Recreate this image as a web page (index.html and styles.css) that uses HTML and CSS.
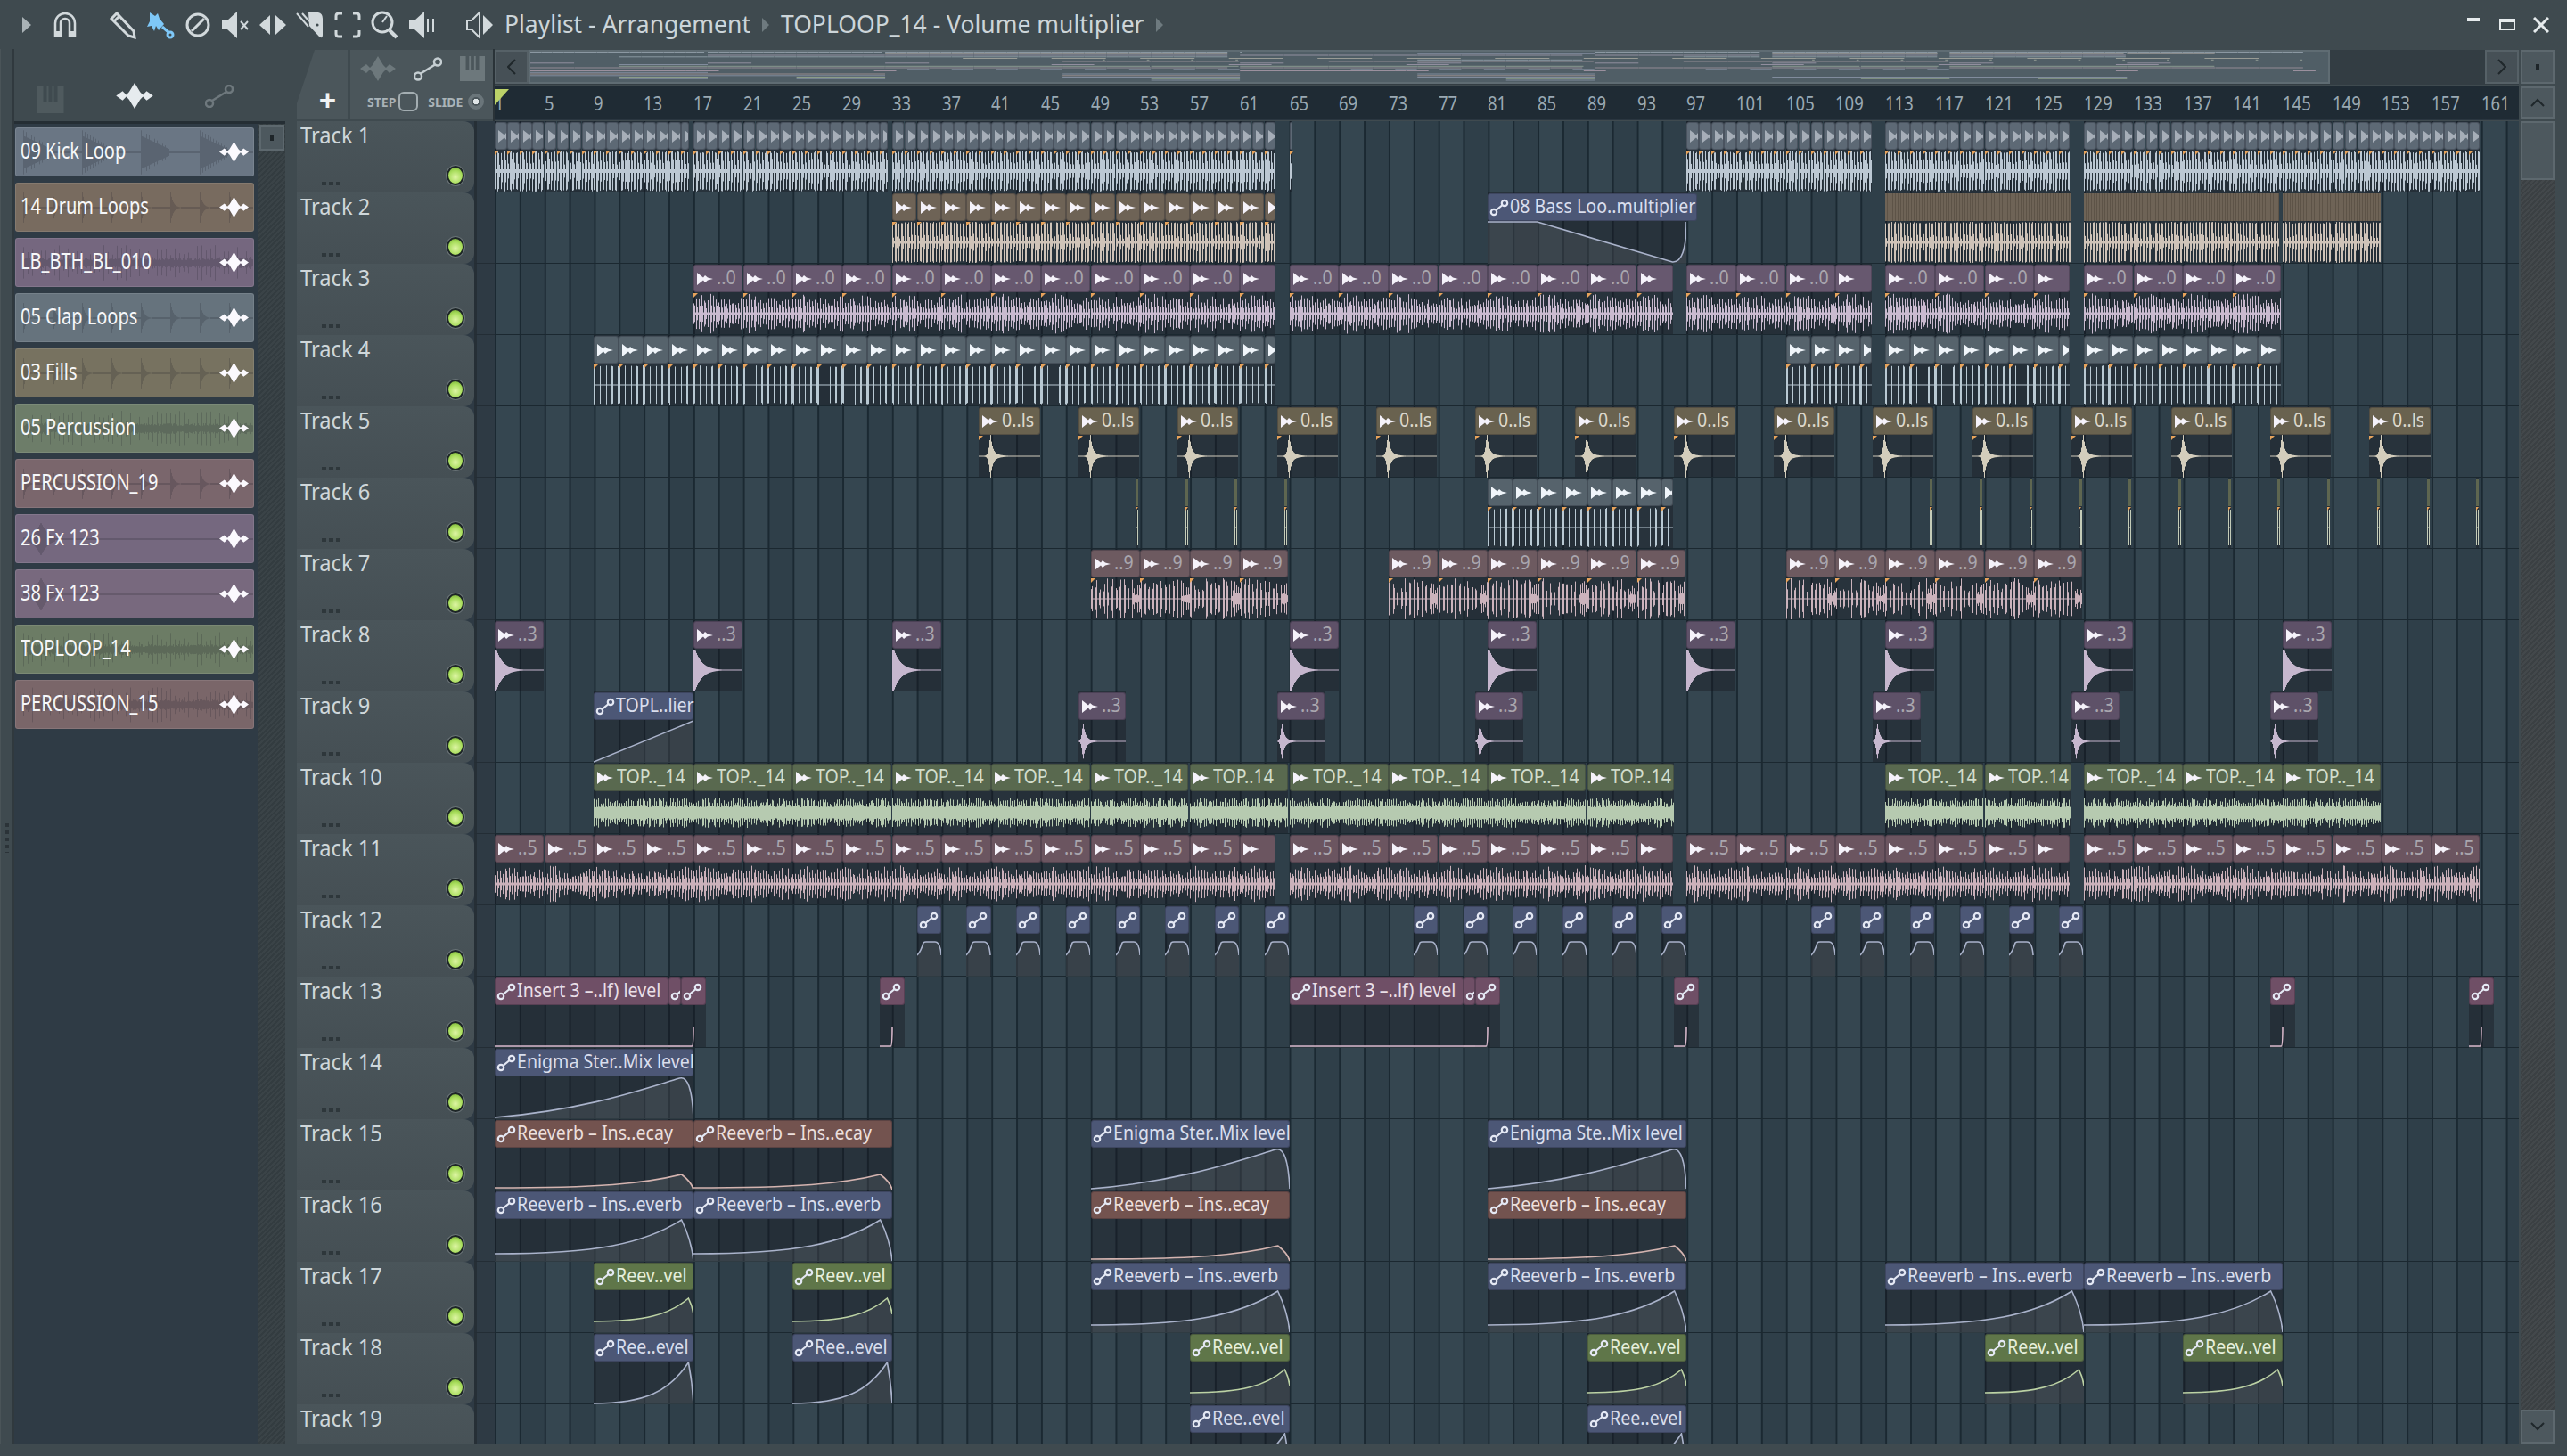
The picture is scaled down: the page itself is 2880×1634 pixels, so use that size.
FILE: index.html
```html
<!DOCTYPE html>
<html lang="en">
<head>
  <meta charset="UTF-8">
  <title>Playlist - Arrangement</title>
  <link rel="stylesheet" href="styles.css">
</head>
<body>
  <div class="app">
    <header class="titlebar">
      <div class="tool-first">
        <svg class="arrow" viewBox="0 0 10 18"><path d="M0 0 L10 9 L0 18 Z"/></svg>
        <svg class="tool" viewBox="0 0 32 32"><path class="magnet" d="M5 28 V14 a11 11 0 0 1 22 0 V28 h-6 V14 a5 5 0 0 0 -10 0 V28 Z"/><path d="M5 23 h6 v6 h-6 Z M21 23 h6 v6 h-6 Z"/></svg>
      </div>
      <div class="tool-group">
        <svg class="tool" viewBox="0 0 32 32"><path class="line" d="M3 9 L9 3 L28 23 L29 30 L22 28 Z M6 12 L12 6"/></svg>
        <svg class="tool tool-on" viewBox="0 0 32 32"><path d="M4 2 L10 6 L13 3 L15 9 L20 15 L14 22 L11 17 L9 23 L6 17 L1 18 L4 12 Z"/><path class="line" d="M18 18 L26 25"/><circle class="line" cx="27" cy="27" r="3"/></svg>
        <svg class="tool" viewBox="0 0 32 32"><circle class="line" cx="16" cy="16" r="12"/><path class="line" d="M9 23 L23 9"/></svg>
        <svg class="tool" viewBox="0 0 32 32"><path d="M1 11 h6 l11 -10 V31 l-11 -10 H1 Z"/><path class="line thin" d="M22 12 l8 9 M30 12 l-8 9"/></svg>
        <svg class="tool" viewBox="0 0 32 32"><path d="M13 5 V27 L1 16 Z M19 5 V27 L31 16 Z"/><path class="line thin dark" d="M16 10 V22"/></svg>
        <svg class="tool" viewBox="0 0 32 32"><path class="line thin" d="M1 3 L14 18 M7 3 L15 12"/><path d="M14 2 H25 Q30 3 30 9 V27 Q30 32 26 29 L15 17 Z"/><circle class="hole" cx="24" cy="16" r="1.6"/></svg>
        <svg class="tool small" viewBox="0 0 32 32"><path class="line" d="M3 10 V6 Q3 3 6 3 H10 M22 3 H26 Q29 3 29 6 V10 M29 22 V26 Q29 29 26 29 H22 M10 29 H6 Q3 29 3 26 V22"/></svg>
        <svg class="tool" viewBox="0 0 32 32"><circle class="line" cx="13" cy="13" r="11"/><path class="line thin" d="M13 13 L18 6"/><path class="line fat" d="M21 22 L29 30"/></svg>
        <svg class="tool" viewBox="0 0 32 32"><path d="M1 11 h6 l11 -10 V31 l-11 -10 H1 Z"/><path class="line thin" d="M22 9 V24 M28 9 V24"/></svg>
      </div>
      <svg class="tool tool-pl" viewBox="0 0 32 32"><path class="line thin" d="M2 11 h5 l9 -9 V30 l-9 -9 H2 Z"/><path d="M20 5 L31 16 L20 27 Z"/></svg>
      <span class="title">Playlist - Arrangement</span>
      <svg class="crumb" viewBox="0 0 8 16"><path d="M0 0 L8 8 L0 16 Z"/></svg>
      <span class="title">TOPLOOP_14 - Volume multiplier</span>
      <svg class="crumb" viewBox="0 0 8 16"><path d="M0 0 L8 8 L0 16 Z"/></svg>
      <div class="win-buttons">
        <span class="win-min"></span>
        <span class="win-max"></span>
        <svg class="win-close" viewBox="0 0 18 18"><path d="M1 1 L17 17 M17 1 L1 17"/></svg>
      </div>
    </header>

    <div class="main">
      <div class="edge"><div class="grip"></div></div>

      <aside class="picker">
        <div class="picker-modes">
          <svg class="piano dim2" viewBox="0 0 30 30"><path d="M0 0 H30 V30 H0 Z M7 0 V17 H11 V0 Z M13 0 V17 H17 V0 Z M19 0 V17 H23 V0 Z" fill-rule="evenodd"/></svg>
          <svg class="star-icon" viewBox="0 0 40 28"><path d="M0 14 L7 9 L11 13 L14 10 L20 0 L26 10 L29 13 L33 9 L40 14 L33 19 L29 15 L26 18 L20 28 L14 18 L11 15 L7 19 Z"/></svg>
          <svg class="auto-icon dim2" viewBox="0 0 32 26"><circle cx="5" cy="21" r="4"/><circle cx="27" cy="5" r="4"/><path d="M8 18 L24 8"/></svg>
        </div>
        <div class="picker-body">
          <ul class="picker-list" id="pickerList"></ul>
          <div class="picker-scroll"><div class="scroll-btn"><i></i></div></div>
        </div>
      </aside>

      <section class="playlist">
        <div class="corner">
          <div class="add-tab"><span>+</span></div>
          <div class="source">
            <div class="source-icons">
              <svg class="star-icon" viewBox="0 0 40 28"><path d="M0 14 L7 9 L11 13 L14 10 L20 0 L26 10 L29 13 L33 9 L40 14 L33 19 L29 15 L26 18 L20 28 L14 18 L11 15 L7 19 Z"/></svg>
              <svg class="auto-icon" viewBox="0 0 32 26"><circle cx="5" cy="21" r="4"/><circle cx="27" cy="5" r="4"/><path d="M8 18 L24 8"/></svg>
              <svg class="piano" viewBox="0 0 30 30"><path d="M0 0 H30 V30 H0 Z M7 0 V17 H11 V0 Z M13 0 V17 H17 V0 Z M19 0 V17 H23 V0 Z" fill-rule="evenodd"/></svg>
            </div>
            <div class="source-opts">
              <span>STEP</span><i class="step-box"></i>
              <span class="slide">SLIDE</span><i class="slide-dot"></i>
            </div>
          </div>
        </div>

        <div class="timeline">
          <div class="overview-row">
            <div class="nav-btn"><svg viewBox="0 0 10 18"><path d="M9 1 L1 9 L9 17"/></svg></div>
            <div class="overview-track"><svg class="overview" id="overview"></svg></div>
            <div class="nav-btn"><svg viewBox="0 0 10 18"><path d="M1 1 L9 9 L1 17"/></svg></div>
          </div>
          <div class="ruler" id="ruler">
            <svg class="play-mark" viewBox="0 0 16 18"><path d="M0 0 H16 L0 18 Z"/></svg>
          </div>
        </div>

        <div class="side-top">
          <div class="scroll-btn tall"><i></i></div>
          <div class="scroll-btn up"><svg viewBox="0 0 16 10"><path d="M1 9 L8 2 L15 9"/></svg></div>
        </div>

        <div class="tracks" id="tracks"></div>

        <div class="vscroll">
          <div class="thumb"></div>
          <div class="scroll-btn down"><svg viewBox="0 0 16 10"><path d="M1 1 L8 8 L15 1"/></svg></div>
        </div>
      </section>
    </div>
  </div>

  <script src="script.js"></script>
</body>
</html>
```

FILE: styles.css
```css
* {
  box-sizing: border-box;
}
html, body {
  margin: 0;
  padding: 0;
}
body {
  width: 2880px;
  height: 1634px;
  overflow: hidden;
  background-color: #3f4a4f;
  color: #d3dadd;
  font-family: "Noto Sans", "Open Sans", sans-serif;
}
svg {
  display: block;
}

/* title bar */
.titlebar {
  height: 55px;
  display: flex;
  align-items: center;
  padding-left: 25px;
  background-color: #3f4a4f;
}
.tool-first {
  display: flex;
  align-items: center;
  width: 97px;
}
.arrow {
  width: 10px;
  height: 18px;
  fill: #a9b2b6;
  margin-right: 22px;
}
.tool-group {
  display: flex;
  gap: 10px;
}
.tool {
  width: 32px;
  height: 32px;
  fill: #d2d9dc;
}
.tool .line {
  fill: none;
  stroke: #d2d9dc;
  stroke-width: 3;
}
.tool .thin {
  stroke-width: 2;
}
.tool .fat {
  stroke-width: 4;
}
.tool .dark {
  stroke: #3f4a4f;
}
.tool .magnet {
  fill: none;
  stroke: #d2d9dc;
  stroke-width: 2.5;
}
.tool .hole {
  fill: #3f4a4f;
}
.tool-on {
  fill: #7ec8f8;
}
.tool-on .line {
  stroke: #7ec8f8;
}
.tool-pl {
  margin-left: 32px;
  margin-right: 12px;
}
.title {
  font-size: 26.5px;
  color: #ccd5d9;
  white-space: nowrap;
  margin-top: -2px;
}
.crumb {
  width: 8px;
  height: 16px;
  fill: #6e7a7f;
  margin: 0 13px;
}
.win-buttons {
  margin-left: auto;
  width: 112px;
  display: flex;
  align-items: center;
  height: 18px;
}
.win-min {
  width: 14px;
  height: 4px;
  margin-top: -12px;
  background: #e6ebed;
}
.win-max {
  width: 18px;
  height: 13px;
  margin-left: 22px;
  border: 2px solid #e6ebed;
  border-top-width: 4px;
}
.win-close {
  width: 18px;
  height: 18px;
  margin-left: 20px;
  fill: none;
  stroke: #e6ebed;
  stroke-width: 3;
}

.main {
  display: flex;
  height: 1565px;
}
.edge {
  width: 16px;
  display: flex;
  align-items: center;
  border-right: 2px solid #30393e;
  border-left: 1px solid #4a5458;
  padding-top: 205px;
  padding-left: 5px;
}
.grip {
  width: 4px;
  height: 33px;
  background: repeating-linear-gradient(#2b3338 0 4px, transparent 4px 8px);
}

/* picker */
.picker {
  width: 304px;
  display: flex;
  flex-direction: column;
}
.picker-modes {
  height: 81px;
  padding: 38px 58px 0 25px;
  display: flex;
  justify-content: space-between;
  align-items: flex-start;
  background-color: #3f4a4f;
}
.picker-modes .piano {
  width: 31px;
  height: 30px;
  margin-top: 4px;
}
.picker-modes .star-icon {
  width: 42px;
  height: 29px;
  fill: #e6ebee;
}
.picker-modes .auto-icon {
  width: 32px;
  height: 26px;
  margin-top: 2px;
}
.dim2 {
  opacity: .35;
}
.picker-body {
  flex: 1;
  display: flex;
  height: 1484px;
  background-color: #2f3b45;
  border-top: 3px solid #252e34;
}
.picker-list {
  list-style-type: none;
  margin: 0;
  padding: 4px 5px 0 1px;
  width: 275px;
  display: flex;
  flex-direction: column;
  gap: 7px;
}
.picker-item {
  position: relative;
  height: 55px;
  border-radius: 3px;
  border: 1px solid rgba(255, 255, 255, .1);
  background: var(--item);
  display: flex;
  align-items: center;
  padding-left: 5px;
  overflow: hidden;
}
.picker-wave {
  position: absolute;
  left: 0;
  top: 0;
  stroke: rgba(30, 30, 40, .2);
  stroke-width: 1;
  fill: none;
}
.picker-item span {
  position: relative;
  font-size: 26px;
  color: #f6f7f9;
  white-space: nowrap;
  margin-top: -5px;
  transform: scaleX(.77);
  transform-origin: left center;
}
.picker-item .star-icon {
  position: absolute;
  right: 5px;
  top: 12px;
  width: 33px;
  height: 29px;
  fill: #fbf9fe;
}
.picker-scroll {
  width: 30px;
  padding: 1px 1px 0 1px;
  background: repeating-linear-gradient(135deg, #3a4347 0 2px, #333c40 2px 4px);
}
.scroll-btn {
  background-color: #4d585e;
  border: 2px solid #5d686e;
  display: flex;
  align-items: center;
  justify-content: center;
  height: 29px;
}
.scroll-btn i {
  width: 4px;
  height: 7px;
  background: #1e2529;
}
.scroll-btn svg {
  width: 16px;
  height: 10px;
  fill: none;
  stroke: #1f272b;
  stroke-width: 2;
}

/* playlist */
.playlist {
  margin-left: 13px;
  width: 2533px;
  display: grid;
  grid-template-columns: 222px 2271px 40px;
  grid-template-rows: 81px 1484px;
}
.corner {
  display: flex;
  gap: 3px;
  padding-top: 1px;
  border-right: 2px solid #2a3338;
}
.add-tab {
  width: 57px;
  height: 78px;
  background: #4b565b;
  clip-path: polygon(20px 0, 100% 0, 100% 100%, 0 100%, 0 60px);
  display: flex;
  align-items: flex-end;
  justify-content: center;
  padding-left: 12px;
}
.add-tab span {
  font-size: 34px;
  line-height: 44px;
  color: #f0f3f4;
  font-weight: bold;
}
.source {
  width: 160px;
  height: 78px;
  background: #4b565b;
  padding: 5px 8px 0 8px;
}
.source-icons {
  display: flex;
  justify-content: space-between;
  align-items: center;
  height: 32px;
  padding-left: 3px;
}
.source .star-icon {
  width: 40px;
  height: 30px;
  fill: #6d787c;
}
.auto-icon {
  fill: none;
  stroke: #c5ced2;
  stroke-width: 2.5;
}
.source .auto-icon {
  width: 32px;
  height: 27px;
}
.piano {
  fill: #6d787c;
}
.source .piano {
  width: 30px;
  height: 28px;
}
.source-opts {
  display: flex;
  align-items: center;
  margin-top: 10px;
  padding-left: 11px;
  font-size: 14px;
  font-weight: bold;
  color: #aab3b7;
}
.step-box {
  width: 22px;
  height: 22px;
  margin-left: 3px;
  border: 2px solid #a3adb1;
  border-radius: 6px;
}
.slide {
  margin-left: 11px;
}
.slide-dot {
  width: 18px;
  height: 18px;
  margin-left: 6px;
  border-radius: 50%;
  border: 4px solid #6a757a;
  background: radial-gradient(#dfe5e7 0 3px, #4b565b 3.5px);
}

.timeline {
  display: flex;
  flex-direction: column;
}
.overview-row {
  height: 39px;
  margin-top: 1px;
  display: flex;
  background-color: #333d43;
}
.nav-btn {
  width: 38px;
  height: 38px;
  background: #465056;
  border: 2px solid #566167;
  display: flex;
  align-items: center;
  justify-content: center;
}
.nav-btn svg {
  width: 10px;
  height: 18px;
  fill: none;
  stroke: #1f272b;
  stroke-width: 2;
}
.overview-track {
  flex: 1;
}
.overview {
  width: 2021px;
  height: 38px;
  background: #505e66;
  border: 2px solid #5f6c73;
}
.overview rect {
  fill: var(--wave);
  opacity: .55;
}
.ruler {
  position: relative;
  height: 38px;
  margin-top: 2px;
  background: #1f2b34;
  border-bottom: 2px solid #2a3640;
  overflow: hidden;
}
.ruler span {
  position: absolute;
  top: 2px;
  font-size: 22px;
  line-height: 32px;
  color: #9aa9b3;
  transform: scaleX(.84);
  transform-origin: left center;
}
.play-mark {
  position: absolute;
  left: 0;
  top: 3px;
  width: 16px;
  height: 18px;
  fill: #bcd268;
  z-index: 1;
}
.side-top {
  padding: 1px 0 0 2px;
  display: flex;
  flex-direction: column;
  gap: 3px;
}
.side-top .scroll-btn {
  width: 38px;
  height: 38px;
}
.side-top .up {
  height: 36px;
}

/* a little room above the first row so its name is not clipped */
.tracks {
  grid-column: 1 / 3;
  height: 1488px;
  margin-top: -4px;
  padding-top: 4px;
  overflow: hidden;
  background-color: #2e3a44;
  background-clip: content-box;
}
.track {
  display: grid;
  grid-template-columns: 199px 23px 2271px;
  height: 80px;
}
.track-head {
  position: relative;
  border-radius: 0 12px 12px 0;
  background: linear-gradient(#4a555a, #454f54);
  padding-left: 4px;
}
.track-name {
  font-size: 26px;
  line-height: 30px;
  color: #cfd7da;
  white-space: nowrap;
  transform: scaleX(.91);
  transform-origin: left center;
}
.track-dots {
  position: absolute;
  left: 28px;
  top: 68px;
  width: 21px;
  height: 4px;
  background: repeating-linear-gradient(90deg, #2e373b 0 5px, transparent 5px 8px);
}
.led {
  position: absolute;
  left: 168px;
  top: 50px;
  width: 20px;
  height: 22px;
  border-radius: 50%;
  border: 2px solid #1d2526;
  outline: 1px solid #697276;
  background: radial-gradient(circle at 50% 60%, #dff5a6 0, #a8dd5c 55%, #6ba32c 100%);
}
.track-strip {
  border-left: 3px solid #262f36;
  border-bottom: 1px solid #232d35;
}
.lane {
  position: relative;
  border-bottom: 1px solid #1b2830;
  background-color: #2f3f49;
  background-image:
    linear-gradient(90deg, #1b2932 0, #1b2932 1.6px, transparent 1.6px),
    linear-gradient(90deg, #354650 0, #354650 50%, transparent 50%);
  background-size: 27.86px 100%, 55.72px 100%;
}

/* clips */
.clip {
  position: absolute;
  top: 0;
  height: 79px;
  background: rgba(22, 22, 28, .38);
}
.clip-head {
  height: 31px;
  margin-top: 1px;
  display: flex;
  align-items: center;
  border-radius: 3px;
  border: 1px solid rgba(20, 20, 30, .25);
  background: var(--head);
  color: var(--text);
}
/* clips too short for a name only show as much of the icon as fits */
.narrow .clip-head {
  overflow: hidden;
}
.clip-head span {
  font-size: 22px;
  line-height: 22px;
  white-space: nowrap;
  flex: none;
  margin-top: -6px;
  transform: scaleX(.89);
  transform-origin: left center;
}
.clip-head .dim {
  color: #a9a6ae;
}
.clip-icon {
  flex: none;
  margin-left: 3px;
  margin-right: 4px;
  width: 18px;
  height: 14px;
  fill: #f5f2fa;
}
.clip-steel .clip-icon {
  fill: #a6aeb8;
}
.clip-row .clip-icon {
  fill: #f0f5fa;
}
.auto-mark {
  flex: none;
  width: 24px;
  height: 30px;
  fill: var(--head);
  stroke: #e4e8f4;
  stroke-width: 2.2;
}
.clip-body {
  position: absolute;
  left: 0;
  top: 32px;
  fill: none;
  stroke: var(--wave);
  stroke-width: 1;
}
.clip-body .fill {
  fill: rgba(255, 255, 255, .09);
  stroke: none;
}
.clip-body .curve {
  stroke-width: 1.6;
}
.mark {
  position: absolute;
  left: 0;
  top: 33px;
  width: 0;
  height: 0;
  border-top: 5px solid #e7a35b;
  border-right: 5px solid transparent;
}
.sliver .mark {
  border-top-width: 4px;
  border-right-width: 3px;
}
.clip.dense .clip-head {
  border: none;
  border-radius: 0;
  background: repeating-linear-gradient(90deg, var(--head) 0 2px, #5d5347 2px 3px);
}
.clip.sliver .clip-head {
  border: none;
  border-radius: 0;
}

/* clip colours */
.clip-steel { --head: #5d6975; --wave: #bcc8d3; --text: #d4dae0; }
.clip-row   { --head: #56636c; --wave: #b9c9d3; --text: #d4dae0; }
.clip-tan   { --head: #6e6356; --wave: #cfc3b8; --text: #ddd5cb; }
.clip-lilac { --head: #67586f; --wave: #c9bacf; --text: #d7cfdb; }
.clip-olive { --head: #69624f; --wave: #d3cdbc; --text: #dcd8cc; }
.clip-sage  { --head: #5e6650; --wave: #c4ccb8; --text: #dbe0d2; }
.clip-mauve { --head: #6d5a60; --wave: #cbb3bc; --text: #d8ced2; }
.clip-plum  { --head: #5e5168; --wave: #c6b7ce; --text: #d7cfdb; }
.clip-moss  { --head: #59694f; --wave: #b6cab0; --text: #d2ddcc; }
.clip-rose  { --head: #6b5560; --wave: #cbb1ba; --text: #d8ced2; }
.clip-blue  { --head: #4c5776; --wave: #aab3cb; --text: #d9deed; }
.clip-pink  { --head: #6f4f66; --wave: #d9b9cc; --text: #eadfe6; }
.clip-red   { --head: #73534f; --wave: #d4b4b0; --text: #ecdfdc; }
.clip-green { --head: #5f7649; --wave: #bcd2a4; --text: #e6efdc; }

/* right scrollbar */
.vscroll {
  margin-left: 2px;
  width: 38px;
  display: flex;
  flex-direction: column;
  background: repeating-linear-gradient(135deg, #43484b 0 2px, #3b4043 2px 4px);
}
.thumb {
  height: 66px;
  background: #4d585e;
  border: 2px solid #5d686e;
}
.vscroll .down {
  margin-top: auto;
  height: 38px;
}
```

FILE: script.js
```js
// Builds the picker, ruler, tracks and overview from the arrangement data below
const BAR = 13.93;
const barX = (bar) => (bar - 1) * BAR;
const STAR = 'M0 14 L7 9 L11 13 L14 10 L20 0 L26 10 L29 13 L33 9 L40 14 L33 19 L29 15 L26 18 L20 28 L14 18 L11 15 L7 19 Z';

// Small repeatable random so the waveforms stay the same on every load
let seed = 12345;
function rnd() {
  seed = (seed * 16807) % 2147483647;
  return seed / 2147483647;
}

// Spiky sample: tall peak, a shorter column, then a gap near the centre line
function spiky(x, pitch, tall, mid, low) {
  const p = x % pitch;
  if (p < pitch * 0.36) return tall();
  if (p < pitch * 0.7) return mid();
  return low;
}

// Half height of the waveform at column x, by kind of sample
const WAVES = {
  kick: (x) => spiky(x, 3.5, () => 20 + rnd() * 3, () => 7 + rnd() * 7, 2),
  drum: (x) => spiky(x, 3.5, () => 21 + rnd() * 2, () => 4 + rnd() * 6, 1.5),
  noise: (x) => spiky(x, 3.1, () => (12 + rnd() * 11) * (0.88 + 0.12 * Math.sin(x / 9)), () => 5 + rnd() * 5, 1.5),
  rose: (x) => spiky(x, 3.1, () => (10 + rnd() * 11) * (0.88 + 0.12 * Math.sin(x / 7)), () => 5 + rnd() * 4, 1.5),
  green: (x) => (x % 2.6 < 1.2 ? 10 + rnd() * 7 : 6 + rnd() * 3),
  lines: (x) => (x % 6.8 < 1.7 ? 20 + rnd() * 2 : 0.5),
  star: (x) => (x < 13 ? Math.pow(x / 13, 8) * 24 + 0.5 : Math.max(0.5, 24 * Math.exp(-(x - 13) / 2.2) + 5 * Math.exp(-(x - 13) / 9))),
  boom: (x) => (x < 2 ? 23 : Math.max(0.5, 23 * Math.exp(-(x - 2) / 8))),
  small: (x) => (x < 5 ? Math.pow(x / 5, 3) * 19 + 0.5 : Math.max(0.5, 19 * Math.exp(-(x - 5) / 2.5) + 4 * Math.exp(-(x - 5) / 8))),
  perc: (x) => {
    const t = x % 55.72;
    if (t > 47) return x % 2 < 1 ? 8 + rnd() * 12 : 3 + rnd() * 4;
    return x % 4.6 < 2 ? 7 + rnd() * 16 : 0.5;
  },
  sliver: (x) => (x < 1 || x > 2 ? 20 : 0.5)
};

function wavePath(kind, w, mid) {
  let d = '';
  for (let x = 0.5; x < w; x += 1) {
    const a = WAVES[kind](x);
    d += `M${x} ${(mid - a).toFixed(1)}V${(mid + a).toFixed(1)}`;
  }
  return d;
}

// Automation curves, y values are pixels inside the clip body
function peakCurve(flat, peak, end, at) {
  return (w) => {
    const p = w * at;
    return `M0 ${flat}C${p * 0.55} ${flat} ${p * 0.8} ${flat - (flat - peak) * 0.3} ${p} ${peak}Q${w * 0.99} ${(peak + end) / 2} ${w} ${end}`;
  };
}
const CURVES = {
  ramp: (w) => `M0 47L${w} 1`,
  enigma: (w) => `M0 46C${w * 0.45} 38 ${w * 0.75} 14 ${w * 0.93} 2Q${w * 0.99} -2 ${w} 46`,
  hump: (w) => `M0 24Q4 20 7 10Q8 9 10 9H20Q26 9 27 24`,
  low: peakCurve(45, 30, 47, 0.94),
  big: peakCurve(39, 1, 47, 0.94),
  mid: peakCurve(35, 9, 27, 0.95),
  sharp: peakCurve(47, 1, 47, 0.95),
  flat: (w) => `M0 46H${w}`,
  rise: (w) => `M0 46H${w * 0.44}Q${w * 0.5} 46 ${w * 0.5} 24`,
  bass: (w) => `M0 1H${w * 0.25}L${w * 0.93} 46Q${w} 47 ${w} 1`
};

// run() fills bars from start to end with equal clips
function run(start, end, step, extra) {
  const clips = [];
  for (let b = start; b < end - 0.01; b += step) {
    clips.push(Object.assign({ at: b, len: Math.min(step, end - b) - 0.02 }, extra));
  }
  return clips;
}
function every(list, len, extra) {
  return list.map((at) => Object.assign({ at, len }, extra));
}
function steps(start, count, step) {
  return Array.from({ length: count }, (_, i) => start + i * step);
}
function runAll(groups, step, extra) {
  return groups.flatMap((g) => run(g[0], g[1], step, extra));
}
function auto(at, len, color, label, curve, headExtra) {
  return { at, len, color, label, curve, headExtra, auto: true };
}

const audio = (color, wave, label, mark) => ({ color, wave, label, mark });

const top10 = audio('moss', 'green', 'TOP.._14');
const top10End = audio('moss', 'green', 'TOP..14');

const TRACKS = [
  runAll([[1, 16.7], [17, 32.7], [33, 63.9], [97, 111.9], [113, 127.9], [129, 160.9]], 1, audio('steel', 'kick', '', true))
    .concat(every([65], 0.2, audio('steel', 'kick', '', true))),

  run(33, 63.9, 2, audio('tan', 'drum', '', true))
    .concat([auto(81, 16, 'blue', '08 Bass Loo..multiplier', 'bass', 12)])
    .concat([[113, 14.9], [129, 15.7], [145, 7.9]].map((g) => Object.assign({ at: g[0], len: g[1], dense: true }, audio('tan', 'drum', '', false)))),

  runAll([[17, 63.9], [65, 95.9], [97, 111.9], [113, 127.9], [129, 144.9]], 4, audio('lilac', 'noise', '..0', true)),

  runAll([[9, 63.9], [105, 111.9], [113, 127.9], [129, 144.9]], 2, audio('row', 'lines', '', true)),

  every(steps(40, 15, 8), 4.9, audio('olive', 'star', '0..ls', true)),

  every(steps(52.6, 4, 4).concat(steps(116.6, 12, 4)), 0.22, Object.assign({ sliver: true }, audio('sage', 'sliver', '', true)))
    .concat(run(81, 95.9, 2, audio('row', 'lines', '', true))),

  runAll([[49, 64.9], [73, 96.9], [105, 128.9]], 4, audio('mauve', 'perc', '..9', true)),

  every([1, 17, 33, 65, 81, 97, 113, 129, 145], 3.95, audio('plum', 'boom', '..3')),

  every([48, 64, 80, 112, 128, 144], 3.85, audio('plum', 'small', '..3'))
    .concat([auto(9, 8, 'blue', 'TOPL..lier', 'ramp')]),

  run(9, 56.9, 8, top10).concat(run(57, 64.9, 8, top10End))
    .concat(run(65, 88.9, 8, top10)).concat(run(89, 96, 8, top10End))
    .concat(run(113, 120.9, 8, top10)).concat(run(121, 128, 8, top10End))
    .concat(run(129, 152.9, 8, top10)),

  runAll([[1, 63.9], [65, 95.9], [97, 127.9], [129, 160.9]], 4, audio('rose', 'rose', '..5')),

  every(steps(35, 8, 4).concat(steps(75, 6, 4), steps(107, 6, 4)), 1.95, { color: 'blue', label: '', curve: 'hump', auto: true }),

  [
    auto(1, 14, 'pink', 'Insert 3 –..lf) level', 'flat'),
    auto(15, 0.98, 'pink', '', 'flat'),
    auto(16, 2, 'pink', '', 'rise'),
    auto(32, 2, 'pink', '', 'rise'),
    auto(65, 14, 'pink', 'Insert 3 –..lf) level', 'flat'),
    auto(79, 0.98, 'pink', '', 'flat'),
    auto(80, 2, 'pink', '', 'rise'),
    auto(96, 2, 'pink', '', 'rise'),
    auto(144, 2, 'pink', '', 'rise'),
    auto(160, 2, 'pink', '', 'rise')
  ],

  [auto(1, 16, 'blue', 'Enigma Ster..Mix level', 'enigma')],

  [
    auto(1, 16, 'red', 'Reeverb – Ins..ecay', 'low'),
    auto(17, 16, 'red', 'Reeverb – Ins..ecay', 'low'),
    auto(49, 16, 'blue', 'Enigma Ster..Mix level', 'enigma'),
    auto(81, 16, 'blue', 'Enigma Ste..Mix level', 'enigma')
  ],

  [
    auto(1, 16, 'blue', 'Reeverb – Ins..everb', 'big'),
    auto(17, 16, 'blue', 'Reeverb – Ins..everb', 'big'),
    auto(49, 16, 'red', 'Reeverb – Ins..ecay', 'low'),
    auto(81, 16, 'red', 'Reeverb – Ins..ecay', 'low')
  ],

  [
    auto(9, 8, 'green', 'Reev..vel', 'mid'),
    auto(25, 8, 'green', 'Reev..vel', 'mid'),
    auto(49, 16, 'blue', 'Reeverb – Ins..everb', 'big'),
    auto(81, 16, 'blue', 'Reeverb – Ins..everb', 'big'),
    auto(113, 16, 'blue', 'Reeverb – Ins..everb', 'big'),
    auto(129, 16, 'blue', 'Reeverb – Ins..everb', 'big')
  ],

  [
    auto(9, 8, 'blue', 'Ree..evel', 'sharp'),
    auto(25, 8, 'blue', 'Ree..evel', 'sharp'),
    auto(57, 8, 'green', 'Reev..vel', 'mid'),
    auto(89, 8, 'green', 'Reev..vel', 'mid'),
    auto(121, 8, 'green', 'Reev..vel', 'mid'),
    auto(137, 8, 'green', 'Reev..vel', 'mid')
  ],

  [
    auto(57, 8, 'blue', 'Ree..evel', 'sharp'),
    auto(89, 8, 'blue', 'Ree..evel', 'sharp')
  ]
];

const AUDIO_ICON = '<svg class="clip-icon" viewBox="0 0 18 14"><path d="M0 0 L7 5.5 L9 3 L12 5.5 L18 7 L12 8.5 L9 11 L7 8.5 L0 14 Z"/></svg>';
const AUTO_ICON = '<svg class="auto-mark" viewBox="0 0 24 30"><path d="M6 20 L18 10"/><circle cx="6" cy="20" r="3.2"/><circle cx="18" cy="10" r="3.2"/></svg>';

function clipHtml(clip) {
  // Whole pixels keep the one pixel waveform columns sharp
  const left = Math.round(barX(clip.at));
  const w = Math.max(3, Math.round(barX(clip.at + clip.len)) - left);
  let cls = `clip clip-${clip.color}`;
  if (clip.dense) cls += ' dense';
  if (clip.sliver) cls += ' sliver';
  if (w < 45) cls += ' narrow';

  let head = '';
  if (clip.auto) {
    head = AUTO_ICON;
  } else if (!clip.dense && !clip.sliver) {
    head = AUDIO_ICON;
  }
  // A clip cut short has no room left for its name
  if (clip.label && w >= 45) {
    const dim = clip.label.startsWith('..') ? ' class="dim"' : '';
    head += `<span${dim}>${clip.label}</span>`;
  }

  let body = '';
  if (clip.auto) {
    const d = CURVES[clip.curve](w);
    body = `<path class="fill" d="${d}V48H0Z"/><path class="curve" d="${d}"/>`;
  } else {
    body = `<path d="${wavePath(clip.wave, w, 24)}"/>`;
  }
  const mark = clip.mark ? '<i class="mark"></i>' : '';
  const headStyle = clip.headExtra ? ` style="width:${w + clip.headExtra}px"` : '';
  return `<div class="${cls}" style="left:${left}px;width:${w}px">` +
    `<div class="clip-head"${headStyle}>${head}</div>` +
    `<svg class="clip-body" width="${w}" height="48">${body}</svg>${mark}</div>`;
}

// Track rows
document.getElementById('tracks').innerHTML = TRACKS.map((clips, i) => `
  <div class="track">
    <div class="track-head">
      <div class="track-name">Track ${i + 1}</div>
      <div class="track-dots"></div>
      <div class="led"></div>
    </div>
    <div class="track-strip"></div>
    <div class="lane">${clips.map(clipHtml).join('')}</div>
  </div>`).join('');

// Ruler labels, one every 4 bars
const ruler = document.getElementById('ruler');
for (let b = 1; b <= 161; b += 4) {
  const label = document.createElement('span');
  label.textContent = b;
  label.style.left = barX(b).toFixed(1) + 'px';
  ruler.appendChild(label);
}

// Overview: every clip as a short line, same colours as the clip
const overview = document.getElementById('overview');
overview.innerHTML = TRACKS.map((clips, i) => clips.map((clip) =>
  `<rect class="clip-${clip.color}" x="${((clip.at - 1) * 12.44).toFixed(1)}" y="${(i * 1.75).toFixed(1)}" width="${(clip.len * 12.44).toFixed(1)}" height="1"/>`
).join('')).join('');

// Picker entries with the dim sample shape behind the name
const PICKER = [
  ['09 Kick Loop', '#6a7684', 'pulse'],
  ['14 Drum Loops', '#786b5f', 'hits'],
  ['LB_BTH_BL_010', '#75677f', 'busy'],
  ['05 Clap Loops', '#66737d', 'hits'],
  ['03 Fills', '#777260', 'hits'],
  ['05 Percussion', '#6d7d69', 'busy'],
  ['PERCUSSION_19', '#7a666c', 'hits'],
  ['26 Fx 123', '#75687f', 'fade'],
  ['38 Fx 123', '#78697e', 'fade'],
  ['TOPLOOP_14', '#6c7c65', 'busy'],
  ['PERCUSSION_15', '#7a6669', 'busy']
];
const PICKER_WAVES = {
  pulse: (x) => { const t = x % 66; return t < 32 ? 25 * (1 - t / 40) * (t % 3 < 1.5 ? 1 : 0.75) : 1; },
  hits: (x) => { const t = x % 33; return t < 12 ? 20 * Math.exp(-t / 3) : 1; },
  busy: (x) => (x % 5 < 1.5 ? 6 + rnd() * 14 : 3 + rnd() * 3),
  fade: (x) => (x < 36 ? 19 * Math.exp(-Math.abs(x - 20) / 8) : 1)
};
document.getElementById('pickerList').innerHTML = PICKER.map((p) => {
  let d = '';
  for (let x = 8.5; x < 268; x += 1) {
    const a = PICKER_WAVES[p[2]](x - 8);
    d += `M${x} ${(27 - a).toFixed(1)}V${(27 + a).toFixed(1)}`;
  }
  return `<li class="picker-item" style="--item:${p[1]}">` +
    `<svg class="picker-wave" width="273" height="55"><path d="${d}"/></svg>` +
    `<span>${p[0]}</span>` +
    `<svg class="star-icon" viewBox="0 0 40 28"><path d="${STAR}"/></svg></li>`;
}).join('');
```
